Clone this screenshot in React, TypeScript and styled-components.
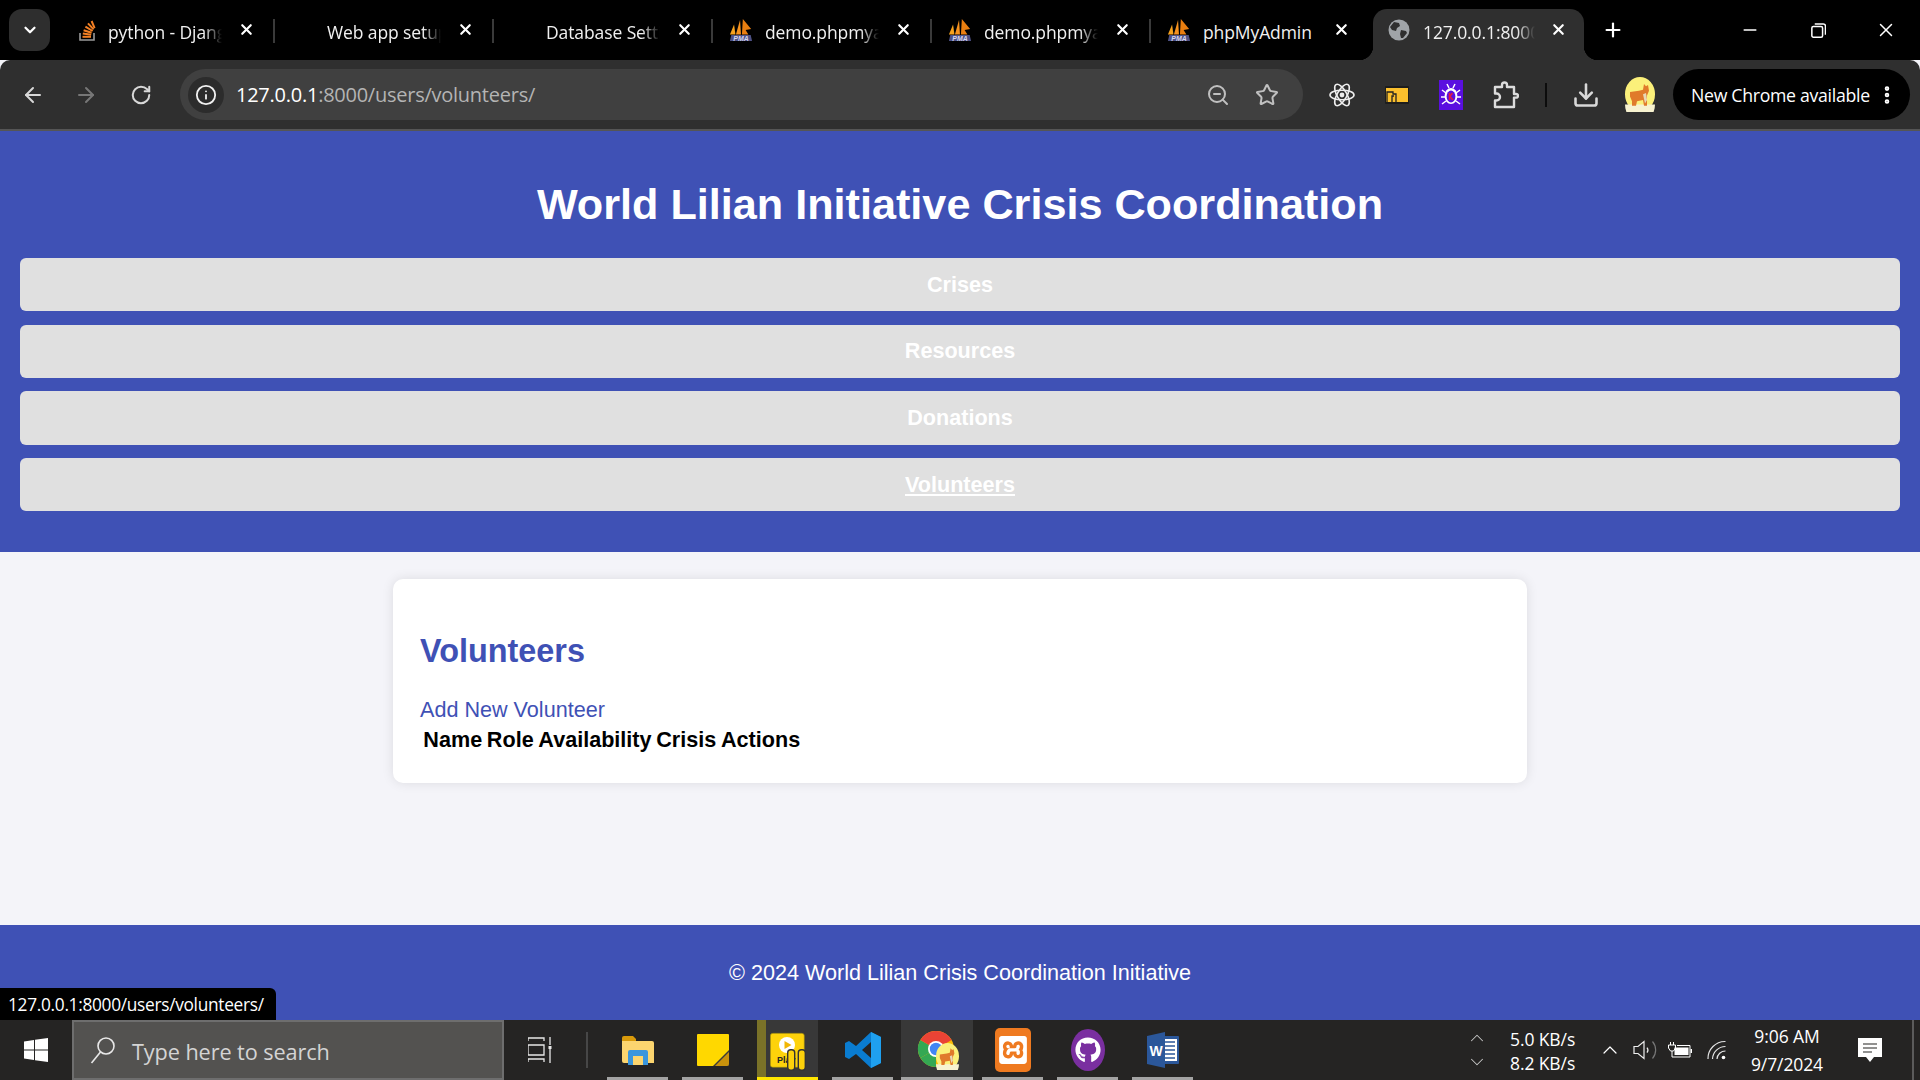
import React from "react";
import styled, { createGlobalStyle } from "styled-components";
import {
  ArrowLeft, ArrowRight, RotateCw, Info, ZoomOut, Star, Download,
  EllipsisVertical, X, Plus, Minus, ChevronDown, ChevronUp,
} from "lucide-react";
import { SiXampp } from "react-icons/si";
import { FaGithub } from "react-icons/fa";

const Global = createGlobalStyle`
  html, body { margin: 0; padding: 0; height: 100%; overflow: hidden; }
  body { font-family: "Liberation Sans", Arial, sans-serif; background: #f4f4f9; }
  #root { height: 100%; }
`;

const Page = styled.div`
  position: relative;
  height: 1080px;
  width: 1920px;
  display: flex;
  flex-direction: column;
  overflow: hidden;
`;

/* ---------- tab strip ---------- */
const TabStrip = styled.div`
  height: 60px;
  flex: none;
  background: #000;
  display: flex;
  align-items: flex-start;
  padding-left: 9px;
  font-family: "Open Sans", "Noto Sans", sans-serif;
  color: #fff;
`;
const TabMenu = styled.div`
  width: 41px;
  height: 42px;
  margin-top: 9px;
  margin-right: 6px;
  border-radius: 13px;
  background: #2e2e2e;
  display: flex;
  align-items: center;
  justify-content: center;
`;
const TabBox = styled.div<{ $active?: boolean; $sep?: boolean }>`
  position: relative;
  width: 219px;
  height: 60px;
  flex: none;
  display: flex;
  align-items: center;
  box-sizing: border-box;
  &::before {
    content: "";
    position: absolute;
    right: 0;
    top: 19px;
    height: 24px;
    width: 2px;
    background: ${(p) => (p.$sep ? "#3a3a3a" : "transparent")};
  }
  ${(p) =>
    p.$active &&
    `
    background: #2f2f2f;
    margin-left: 3px;
    width: 211px;
    margin-top: 9px;
    height: 51px;
    padding-bottom: 9px;
    border-radius: 14px 14px 0 0;
    &::before {
      left: -14px; right: auto; top: auto; bottom: 0; width: 14px; height: 14px;
      background: radial-gradient(circle at 0 0, #000 14px, #2f2f2f 14.5px);
    }
    &::after {
      content: "";
      position: absolute;
      right: -14px; bottom: 0; width: 14px; height: 14px;
      background: radial-gradient(circle at 100% 0, #000 14px, #2f2f2f 14.5px);
    }
  `}
`;
const TabIcon = styled.div<{ $left: number }>`
  width: 24px;
  height: 24px;
  flex: none;
  margin-left: ${(p) => p.$left}px;
  display: flex;
  align-items: center;
  justify-content: center;
`;
const TabTitle = styled.div<{ $gap: number; $w?: number; $fits?: boolean }>`
  margin-left: ${(p) => p.$gap}px;
  width: ${(p) => p.$w ?? 114}px;
  padding-top: 3px;
  font-size: 17.5px;
  letter-spacing: -0.1px;
  white-space: nowrap;
  overflow: hidden;
  color: #f0f0f0;
  ${(p) =>
    !p.$fits &&
    `
    -webkit-mask-image: linear-gradient(90deg, #000 84%, transparent 100%);
    mask-image: linear-gradient(90deg, #000 84%, transparent 100%);
  `}
`;
const TabClose = styled.div<{ $gap: number }>`
  margin-left: ${(p) => p.$gap}px;
  margin-top: -2px;
  display: flex;
  color: #fff;
`;
const NewTab = styled.div`
  width: 30px;
  height: 60px;
  margin-left: 14px;
  display: flex;
  align-items: center;
  justify-content: center;
`;
const WinControls = styled.div`
  margin-left: auto;
  display: flex;
  align-items: center;
  height: 60px;
`;
const WinButton = styled.div`
  width: 68px;
  height: 60px;
  display: flex;
  align-items: center;
  justify-content: center;
  color: #fff;
`;

/* ---------- toolbar ---------- */
const Toolbar = styled.div`
  height: 69px;
  flex: none;
  background: #2f2f2f;
  border-radius: 10px 10px 0 0;
  display: flex;
  align-items: center;
  padding-left: 11px;
  border-bottom: 2px solid #555;
  font-family: "Open Sans", "Noto Sans", sans-serif;
`;
const ToolSlot = styled.div<{ $w: number; $c?: string }>`
  width: ${(p) => p.$w}px;
  height: 44px;
  flex: none;
  display: flex;
  align-items: center;
  justify-content: center;
  color: ${(p) => p.$c ?? "#d8d8d8"};
`;
const UrlBar = styled.div`
  width: 1123px;
  height: 51px;
  margin-left: 15px;
  margin-right: 12px;
  flex: none;
  border-radius: 26px;
  background: #404040;
  display: flex;
  align-items: center;
  padding-left: 8px;
  box-sizing: border-box;
`;
const InfoChip = styled.div`
  width: 36px;
  height: 36px;
  border-radius: 50%;
  background: #2c2c2c;
  color: #f0f0f0;
  display: flex;
  align-items: center;
  justify-content: center;
  flex: none;
`;
const UrlText = styled.div`
  margin-left: 12px;
  font-size: 20px;
  letter-spacing: -0.25px;
  color: #b4b4b4;
  flex: 1;
  white-space: nowrap;
  b { font-weight: 400; color: #fff; }
`;
const UrlAction = styled.div<{ $mr: number }>`
  margin-right: ${(p) => p.$mr}px;
  color: #c0c0c0;
  display: flex;
`;
const ToolSep = styled.div`
  width: 2px;
  height: 24px;
  margin: 0 12px;
  background: #0c0c0c;
  flex: none;
`;
const UpdatePill = styled.div`
  margin-left: 6px;
  width: 237px;
  height: 51px;
  border-radius: 26px;
  background: #000;
  color: #fff;
  font-size: 17.7px;
  letter-spacing: -0.3px;
  display: flex;
  align-items: center;
  justify-content: space-between;
  padding: 0 12px 0 18px;
  box-sizing: border-box;
  white-space: nowrap;
`;

/* ---------- page ---------- */
const Header = styled.header`
  height: 421px;
  flex: none;
  background: #3f51b5;
  box-sizing: border-box;
  padding: 48px 20px 0;
  color: #fff;
  text-align: center;
`;
const Title = styled.h1`
  margin: 0 0 28px;
  font-size: 43.2px;
  line-height: 51px;
  font-weight: 700;
`;
const Nav = styled.nav`
  display: flex;
  flex-direction: column;
  gap: 13.33px;
`;
const NavItem = styled.a<{ $current?: boolean }>`
  height: 53.33px;
  border-radius: 6px;
  background: #e0e0e0;
  color: #fff;
  font-size: 21.6px;
  font-weight: 700;
  display: flex;
  align-items: center;
  justify-content: center;
  text-decoration: ${(p) => (p.$current ? "underline" : "none")};
`;
const Main = styled.main`
  flex: 1;
  display: flex;
  justify-content: center;
  align-items: flex-start;
  padding-top: 27px;
  background: #f4f4f9;
`;
const Card = styled.section`
  width: 1134px;
  height: 204px;
  box-sizing: border-box;
  padding: 0 27px;
  background: #fff;
  border-radius: 10px;
  box-shadow: 0 0 12px rgba(0, 0, 0, 0.1);
`;
const CardTitle = styled.h2`
  margin: 53px 0 0;
  font-size: 32.4px;
  line-height: 38px;
  color: #3f51b5;
`;
const AddLink = styled.a`
  display: block;
  margin-top: 27px;
  font-size: 21.6px;
  line-height: 26px;
  color: #3f51b5;
`;
const Table = styled.table`
  border-spacing: 2.7px;
  margin-top: 1px;
  th {
    padding: 1.35px;
    font-size: 21.6px;
    line-height: 25px;
    font-weight: 700;
    color: #000;
  }
`;
const Footer = styled.footer`
  height: 95px;
  flex: none;
  background: #3f51b5;
  color: #fff;
  font-size: 21.6px;
  display: flex;
  align-items: center;
  justify-content: center;
`;
const StatusTip = styled.div`
  position: absolute;
  left: 0;
  bottom: 60px;
  height: 32px;
  width: 276px;
  box-sizing: border-box;
  background: #000;
  color: #fff;
  border-top-right-radius: 6px;
  font-family: "Open Sans", "Noto Sans", sans-serif;
  font-size: 17.3px;
  letter-spacing: -0.3px;
  padding-left: 8px;
  line-height: 34px;
  white-space: nowrap;
`;

/* ---------- taskbar ---------- */
const Taskbar = styled.div`
  height: 60px;
  flex: none;
  background: #252423;
  display: flex;
  align-items: stretch;
  color: #fff;
  font-family: "Open Sans", "Noto Sans", sans-serif;
`;
const StartBtn = styled.div`
  width: 72px;
  flex: none;
  display: flex;
  align-items: center;
  justify-content: center;
`;
const SearchBox = styled.div`
  width: 432px;
  flex: none;
  box-sizing: border-box;
  background: #535250;
  border: 2px solid #6e6e6e;
  display: flex;
  align-items: center;
  padding-left: 16px;
  color: #d4d4d4;
  font-size: 21.7px;
  letter-spacing: -0.1px;
  white-space: nowrap;
  span { margin-left: 16px; padding-top: 2px; }
`;
const TaskView = styled.div`
  width: 72px;
  flex: none;
  display: flex;
  align-items: center;
  justify-content: center;
`;
const BarSep = styled.div`
  width: 2px;
  height: 36px;
  margin: 12px 0 0 10px;
  background: #474747;
  flex: none;
`;
const AppSlot = styled.div<{ $w?: number; $ml: number; $bar?: string; $bg?: string; $strip?: boolean }>`
  position: relative;
  width: ${(p) => p.$w ?? 61}px;
  margin-left: ${(p) => p.$ml}px;
  flex: none;
  display: flex;
  align-items: center;
  justify-content: center;
  background: ${(p) => p.$bg ?? "transparent"};
  &::before {
    content: "";
    position: absolute;
    left: 0;
    top: 0;
    bottom: 0;
    width: ${(p) => (p.$strip ? "9px" : "0")};
    background: #7a7228;
  }
  &::after {
    content: "";
    position: absolute;
    left: 0;
    right: 0;
    bottom: 0;
    height: 3px;
    background: ${(p) => p.$bar ?? "#a3a3a3"};
  }
`;
const Tray = styled.div`
  margin-left: auto;
  display: flex;
  align-items: center;
  font-size: 17.5px;
`;
const SpeedArrows = styled.div`
  width: 20px;
  display: flex;
  flex-direction: column;
  gap: 2px;
  align-items: center;
  color: #c8c8c8;
`;
const SpeedText = styled.div`
  margin-left: 23px;
  padding-top: 2px;
  line-height: 24px;
  width: 88px;
  white-space: nowrap;
  letter-spacing: -0.1px;
`;
const TrayIcon = styled.div<{ $w: number }>`
  width: ${(p) => p.$w}px;
  display: flex;
  justify-content: center;
  align-items: center;
`;
const Clock = styled.div`
  width: 90px;
  text-align: center;
  line-height: 28px;
  white-space: nowrap;
  letter-spacing: -0.1px;
`;
const Notify = styled.div`
  width: 24px;
  margin-left: 26px;
  display: flex;
`;
const DesktopPeek = styled.div`
  width: 2px;
  height: 60px;
  background: #5b5b5b;
  margin-left: 30px;
  margin-right: 6px;
`;

/* ---------- drawings ---------- */
const StackIcon = () => (
  <svg width="20" height="24" viewBox="0 0 20 24" fill="none">
    <path d="M2 15v7h14v-7" stroke="#9a9a9a" strokeWidth="1.6" />
    <g stroke="#f48024" strokeWidth="2">
      <path d="M4.5 18.8h8.5" />
      <path d="M4.8 15.6l8.4 1.2" />
      <path d="M5.6 12.2l8 2.6" />
      <path d="M7.4 8.6l7.2 4.4" />
      <path d="M10 5.4l5.6 6" />
      <path d="M13.6 3l3 7.2" />
    </g>
  </svg>
);
const PmaIcon = () => (
  <svg width="26" height="26" viewBox="0 0 26 26">
    <path d="M5.5 7L1 18h6z" fill="#f6a21e" />
    <path d="M12 2L7.5 18h5.5z" fill="#f6921e" />
    <path d="M15 1l-1 17h7l-3-5 6-1z" fill="#e97e10" />
    <path d="M1 25l1.5-6.5h21L25 25z" fill="#4d5185" />
    <text x="13" y="24.6" textAnchor="middle" fontSize="7.5" fontStyle="italic" fontWeight="700" fill="#d5d7ee" fontFamily="Liberation Sans">PMA</text>
  </svg>
);
const GlobeIcon = () => (
  <svg width="22" height="22" viewBox="0 0 22 22">
    <circle cx="11" cy="11" r="10.5" fill="#a0a4a8" />
    <path d="M6 3l5 1 1 3-3 2-1 3-4-1-2-3zM13 11l5 1 1 2-4 5-2 0-1-4z" fill="#2f2f2f" />
  </svg>
);
const ReactIcon = () => (
  <svg width="26" height="26" viewBox="0 0 26 26" fill="none" stroke="#eee" strokeWidth="1.6">
    <ellipse cx="13" cy="13" rx="12" ry="4.8" />
    <ellipse cx="13" cy="13" rx="12" ry="4.8" transform="rotate(60 13 13)" />
    <ellipse cx="13" cy="13" rx="12" ry="4.8" transform="rotate(120 13 13)" />
    <circle cx="13" cy="13" r="2.4" fill="#eee" stroke="none" />
  </svg>
);
const BoxAppIcon = () => (
  <svg width="24" height="18" viewBox="0 0 24 18">
    <rect width="24" height="18" rx="1" fill="#1d1d1d" />
    <rect x="1" y="2" width="22" height="14" fill="#fbc02d" />
    <path d="M2 16V6h6v2h3v8M7 16v-6h2" fill="none" stroke="#222" strokeWidth="1.3" />
  </svg>
);
const BugIcon = () => (
  <svg width="24" height="30" viewBox="0 0 24 30">
    <rect width="24" height="30" fill="#5a0fe0" />
    <ellipse cx="12" cy="16" rx="6.4" ry="8" fill="#fff" />
    <ellipse cx="12" cy="16.5" rx="4.4" ry="6" fill="#5a0fe0" />
    <path d="M10.5 13v7M10.5 17l3-4M11 16.5l3 3.5" stroke="#e01b3c" strokeWidth="1.5" fill="none" />
    <path d="M3 10l4 3M21 10l-4 3M2 17h4M22 17h-4M3 24l4-3M21 24l-4-3M8 4l2 4M16 4l-2 4" stroke="#fff" strokeWidth="1.5" />
  </svg>
);
const PuzzleIcon = () => (
  <svg width="26" height="28" viewBox="0 0 26 28" fill="none" stroke="#dcdcdc" strokeWidth="2.4" strokeLinejoin="round">
    <path d="M2 6h7V4a2.5 2.5 0 0 1 5 0v2h7v7h2.2a1.8 1.8 0 0 1 0 3.6H21V26H2v-6.5h1.5a3 3 0 0 0 0-7H2z" />
  </svg>
);
const Corgi = ({ size = 30 }: { size?: number }) => (
  <svg width={size} height={size * 1.15} viewBox="0 0 30 30" preserveAspectRatio="none">
    <circle cx="15" cy="15" r="15" fill="#fbf07a" />
    <path d="M0 24h30v0a15 15 0 0 1-30 0z" fill="#f7f2d0" />
    <path d="M5 13l9-1 4-1 1-5 2 2 2-1 1 5-2 4v9h-3l-1-5-6 1-1 4H7v-4l-2-4z" fill="#e07a2b" />
    <path d="M18 15l3-1 1 6-2 3z" fill="#e8d7b5" />
  </svg>
);
const WinLogo = () => (
  <svg width="24" height="24" viewBox="0 0 24 24" fill="#fff">
    <path d="M0 3.4l10-1.4v9.5H0zM11 1.8L24 0v11.5H11zM0 12.5h10V22L0 20.6zM11 12.5h13V24l-13-1.8z" />
  </svg>
);
const SearchGlyph = () => (
  <svg width="26" height="28" viewBox="0 0 26 28" fill="none" stroke="#e8e8e8" strokeWidth="1.6">
    <circle cx="16" cy="10" r="8" />
    <path d="M10.5 16L1.5 27" />
  </svg>
);
const TaskViewIcon = () => (
  <svg width="24" height="26" viewBox="0 0 24 26" fill="none" stroke="#e8e8e8" strokeWidth="1.3">
    <path d="M0 1h16v3M0 1v3M0 8h16v10H0zM0 25v-3h16v3M22 0v8M22 12v14" />
    <rect x="20.5" y="9" width="3" height="3" fill="#e8e8e8" stroke="none" />
  </svg>
);
const FolderIcon = () => (
  <svg width="32" height="30" viewBox="0 0 32 30">
    <path d="M0 3a2 2 0 0 1 2-2h9l3 3v4H0z" fill="#d99a0b" />
    <path d="M0 6h30a2 2 0 0 1 2 2v20H2a2 2 0 0 1-2-2z" fill="#fcd56f" />
    <path d="M6 30V17a2 2 0 0 1 2-2h16a2 2 0 0 1 2 2v13h-5v-9H11v9z" fill="#3a96dd" />
    <rect x="11" y="26" width="10" height="4" fill="#fcd56f" />
  </svg>
);
const StickyIcon = () => (
  <svg width="32" height="32" viewBox="0 0 32 32">
    <path d="M1 0h30a1 1 0 0 1 1 1v31H1a1 1 0 0 1-1-1V1a1 1 0 0 1 1-1z" fill="#ffd800" />
    <path d="M32 16v16H16z" fill="#3a3a3a" />
    <path d="M32 18L18 32h12a2 2 0 0 0 2-2z" fill="#c9920c" />
  </svg>
);
const PbiIcon = () => (
  <svg width="36" height="42" viewBox="0 0 36 42">
    <rect x="0.3" y="4.3" width="34" height="34" rx="2.5" fill="#fdd20b" stroke="#8f7d12" strokeWidth="0.6" />
    <circle cx="17" cy="16" r="8" fill="#fff" />
    <path d="M14.5 12l7 4-7 4z" fill="#f2b705" />
    <text x="7" y="34" fontSize="9" fontWeight="700" fill="#222" fontFamily="Liberation Sans">Play</text>
    <rect x="17.7" y="20.7" width="7" height="20.6" rx="3" fill="#fdd20b" stroke="#333" strokeWidth="1.4" />
    <rect x="28.3" y="20.7" width="7" height="20.6" rx="3" fill="#fdd20b" stroke="#333" strokeWidth="1.4" />
  </svg>
);
const VsCodeIcon = () => (
  <svg width="36" height="36" viewBox="0 0 36 36">
    <path d="M26 0l10 5v26l-10 5-15-14-7 5-4-2V11l4-2 7 5zM26 10l-9 8 9 8z" fill="#0a7cd0" fillRule="evenodd" />
    <path d="M26 0l10 5v26l-10 5z" fill="#1fa0ef" />
  </svg>
);
const ChromeBadge = () => (
  <svg width="38" height="38" viewBox="0 0 38 38">
    <circle cx="19" cy="19" r="18" fill="#fbbc04" />
    <path d="M19 19L3.4 28A18 18 0 0 0 19 37z" fill="#34a853" />
    <path d="M19 19L3.4 10A18 18 0 0 0 3.4 28z" fill="#34a853" />
    <path d="M19 1A18 18 0 0 0 3.4 10L19 19l15.6-9A18 18 0 0 0 19 1z" fill="#ea4335" />
    <circle cx="19" cy="19" r="8" fill="#fff" />
    <circle cx="19" cy="19" r="6.2" fill="#4285f4" />
  </svg>
);
const ChromeStack = styled.div`
  position: relative;
  width: 38px;
  height: 38px;
  margin-top: -3px;
  margin-right: 2px;
`;
const ChromeAvatar = styled.div`
  position: absolute;
  right: -4px;
  bottom: -2px;
  display: flex;
`;
const XamppTile = styled.div`
  width: 36px;
  height: 44px;
  border-radius: 5px;
  background: #ef7a20;
  color: #fff;
  display: flex;
  align-items: center;
  justify-content: center;
`;
const GithubDisc = styled.div`
  width: 34px;
  height: 42px;
  border-radius: 50%;
  background: #7a2fa0;
  color: #fff;
  display: flex;
  align-items: center;
  justify-content: center;
`;
const WordIcon = () => (
  <svg width="32" height="36" viewBox="0 0 32 36">
    <path d="M14 4h17a1 1 0 0 1 1 1v26a1 1 0 0 1-1 1H14z" fill="#2b579a" />
    <path d="M15 7h15v22H15z" fill="#fff" />
    <path d="M18 10h10M18 14h10M18 18h10M18 22h10M18 26h10" stroke="#2b579a" strokeWidth="1.6" />
    <path d="M0 4l18-4v36L0 32z" fill="#2b579a" />
    <text x="9" y="24" textAnchor="middle" fontSize="14" fontWeight="700" fill="#fff" fontFamily="Liberation Sans">W</text>
  </svg>
);
const SpeakerIcon = () => (
  <svg width="24" height="20" viewBox="0 0 24 20" fill="none" stroke="#eee" strokeWidth="1.2">
    <path d="M1 6.5h4L11 1.5v17L5 13.5H1z" />
    <path d="M14 7.5a4 4 0 0 1 0 5" />
    <path d="M19.5 1.5a13 13 0 0 1 0 17" stroke="#777" />
  </svg>
);
const BatteryIcon = () => (
  <svg width="24" height="16" viewBox="0 0 24 16" fill="none">
    <path d="M2.5 0v3M5.5 0v3" stroke="#fff" />
    <path d="M0.5 3h7v3l-2 3h-3l-2-3z" stroke="#fff" />
    <path d="M4 9v6h18V3.5H9" stroke="#fff" />
    <rect x="6.5" y="5.5" width="14" height="7.5" fill="#fff" />
    <rect x="22.6" y="7" width="1.4" height="4" fill="#fff" />
  </svg>
);
const WifiIcon = () => (
  <svg width="20" height="20" viewBox="0 0 20 20" fill="none" stroke="#e4e4e4" strokeWidth="1.2">
    <path d="M1 19A17 17 0 0 1 18.5 1.5" />
    <path d="M5.5 19A13 13 0 0 1 18.5 6.5" />
    <path d="M10 19A8.5 8.5 0 0 1 18.5 11" />
    <circle cx="16.5" cy="17.5" r="1.8" fill="#fff" stroke="none" />
  </svg>
);
const NotifyIcon = () => (
  <svg width="24" height="24" viewBox="0 0 24 24">
    <path d="M0 0h24v19h-8l-4 5-4-5H0z" fill="#fff" />
    <path d="M5 6h14M5 10h14M5 14h9" stroke="#252423" strokeWidth="1.2" />
  </svg>
);
const RestoreIcon = () => (
  <svg width="15" height="15" viewBox="0 0 14 14" fill="none" stroke="#fff" strokeWidth="1.4">
    <rect x="0.8" y="3.2" width="10" height="10" rx="1.4" />
    <path d="M3.5 1h8a2 2 0 0 1 2 2v8" />
  </svg>
);

const tabs = [
  { title: "python - Django Forms", icon: <StackIcon />, left: 20, gap: 8 },
  { title: "Web app setup guide", icon: null, left: 28, gap: 0 },
  { title: "Database Settings", icon: null, left: 28, gap: 0 },
  { title: "demo.phpmyadmin", icon: <PmaIcon />, left: 16, gap: 12 },
  { title: "demo.phpmyadmin", icon: <PmaIcon />, left: 16, gap: 12 },
  { title: "phpMyAdmin", icon: <PmaIcon />, left: 16, gap: 12, fits: true },
];
const apps: { ml: number; w?: number; bar?: string; bg?: string; strip?: boolean; node: React.ReactNode }[] = [
  { ml: 19, node: <FolderIcon /> },
  { ml: 14, node: <StickyIcon /> },
  { ml: 14, bar: "#ffe600", bg: "#383838", strip: true, node: <PbiIcon /> },
  { ml: 14, node: <VsCodeIcon /> },
  {
    ml: 8,
    w: 72,
    bg: "#383838",
    node: (
      <ChromeStack>
        <ChromeBadge />
        <ChromeAvatar><Corgi size={23} /></ChromeAvatar>
      </ChromeStack>
    ),
  },
  { ml: 9, node: <XamppTile><SiXampp size={28} /></XamppTile> },
  { ml: 14, node: <GithubDisc><FaGithub size={26} /></GithubDisc> },
  { ml: 14, node: <WordIcon /> },
];

export default function App() {
  return (
    <Page>
      <Global />
      <TabStrip>
        <TabMenu><ChevronDown size={18} color="#fff" strokeWidth={3} /></TabMenu>
        {tabs.map((t, i) => (
          <TabBox key={i} $sep={i < 5}>
            <TabIcon $left={t.left}>{t.icon}</TabIcon>
            <TabTitle $gap={t.gap} $fits={t.fits}>{t.title}</TabTitle>
            <TabClose $gap={16}><X size={17} strokeWidth={3} /></TabClose>
          </TabBox>
        ))}
        <TabBox $active>
          <TabIcon $left={14}><GlobeIcon /></TabIcon>
          <TabTitle $gap={12} $w={112}>127.0.0.1:8000/users/volunteers</TabTitle>
          <TabClose $gap={15}><X size={17} strokeWidth={3} /></TabClose>
        </TabBox>
        <NewTab><Plus size={22} color="#fff" strokeWidth={2.4} /></NewTab>
        <WinControls>
          <WinButton><Minus size={20} strokeWidth={1.8} /></WinButton>
          <WinButton><RestoreIcon /></WinButton>
          <WinButton><X size={22} strokeWidth={1.6} /></WinButton>
        </WinControls>
      </TabStrip>

      <Toolbar>
        <ToolSlot $w={44}><ArrowLeft size={24} strokeWidth={2} /></ToolSlot>
        <ToolSlot $w={62} $c="#777"><ArrowRight size={24} strokeWidth={2} /></ToolSlot>
        <ToolSlot $w={48}><RotateCw size={22} strokeWidth={2.2} /></ToolSlot>
        <UrlBar>
          <InfoChip><Info size={22} strokeWidth={2} /></InfoChip>
          <UrlText><b>127.0.0.1</b>:8000/users/volunteers/</UrlText>
          <UrlAction $mr={25}><ZoomOut size={24} strokeWidth={2} /></UrlAction>
          <UrlAction $mr={24}><Star size={24} strokeWidth={2} /></UrlAction>
        </UrlBar>
        <ToolSlot $w={54.5}><ReactIcon /></ToolSlot>
        <ToolSlot $w={54.5}><BoxAppIcon /></ToolSlot>
        <ToolSlot $w={54.5}><BugIcon /></ToolSlot>
        <ToolSlot $w={54.5}><PuzzleIcon /></ToolSlot>
        <ToolSep />
        <ToolSlot $w={54}><Download size={28} strokeWidth={2.2} /></ToolSlot>
        <ToolSlot $w={54}><Corgi /></ToolSlot>
        <UpdatePill>
          New Chrome available
          <EllipsisVertical size={22} strokeWidth={3} />
        </UpdatePill>
      </Toolbar>

      <Header>
        <Title>World Lilian Initiative Crisis Coordination</Title>
        <Nav>
          <NavItem>Crises</NavItem>
          <NavItem>Resources</NavItem>
          <NavItem>Donations</NavItem>
          <NavItem $current>Volunteers</NavItem>
        </Nav>
      </Header>

      <Main>
        <Card>
          <CardTitle>Volunteers</CardTitle>
          <AddLink>Add New Volunteer</AddLink>
          <Table>
            <thead>
              <tr>
                <th>Name</th>
                <th>Role</th>
                <th>Availability</th>
                <th>Crisis</th>
                <th>Actions</th>
              </tr>
            </thead>
          </Table>
        </Card>
      </Main>

      <Footer>© 2024 World Lilian Crisis Coordination Initiative</Footer>

      <Taskbar>
        <StartBtn><WinLogo /></StartBtn>
        <SearchBox>
          <SearchGlyph />
          <span>Type here to search</span>
        </SearchBox>
        <TaskView><TaskViewIcon /></TaskView>
        <BarSep />
        {apps.map((a, i) => (
          <AppSlot key={i} $ml={a.ml} $w={a.w} $bar={a.bar} $bg={a.bg} $strip={a.strip}>{a.node}</AppSlot>
        ))}
        <Tray>
          <SpeedArrows>
            <ChevronUp size={22} strokeWidth={1.1} />
            <ChevronDown size={22} strokeWidth={1.1} />
          </SpeedArrows>
          <SpeedText>5.0 KB/s<br />8.2 KB/s</SpeedText>
          <TrayIcon $w={24}><ChevronUp size={28} strokeWidth={1.2} /></TrayIcon>
          <TrayIcon $w={46}><SpeakerIcon /></TrayIcon>
          <TrayIcon $w={24}><BatteryIcon /></TrayIcon>
          <TrayIcon $w={50}><WifiIcon /></TrayIcon>
          <Clock>9:06 AM<br />9/7/2024</Clock>
          <Notify><NotifyIcon /></Notify>
          <DesktopPeek />
        </Tray>
      </Taskbar>

      <StatusTip>127.0.0.1:8000/users/volunteers/</StatusTip>
    </Page>
  );
}
